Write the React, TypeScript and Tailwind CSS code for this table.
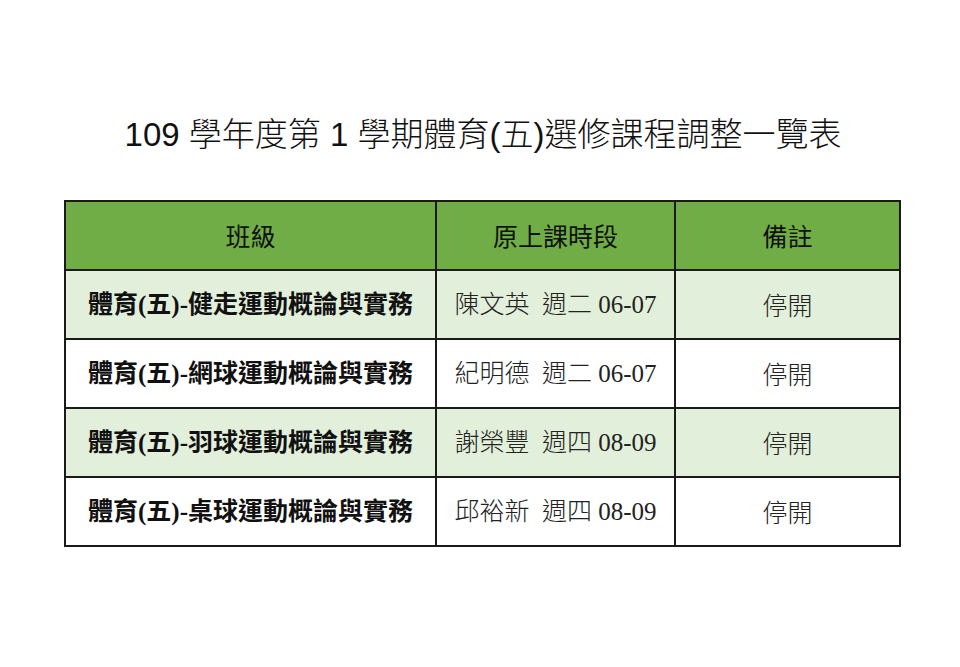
const rows = [
  { name: '體育(五)-健走運動概論與實務', time: '陳文英  週二 06-07', shaded: true },
  { name: '體育(五)-網球運動概論與實務', time: '紀明德  週二 06-07', shaded: false },
  { name: '體育(五)-羽球運動概論與實務', time: '謝榮豐  週四 08-09', shaded: true },
  { name: '體育(五)-桌球運動概論與實務', time: '邱裕新  週四 08-09', shaded: false },
]

export default function App() {
  return (
    <div className="w-[960px] h-[667px] bg-white flex flex-col">
      <h1 className="mt-[112px] h-[46px] text-center text-[33px] leading-[46px] font-light text-[#111] font-['Liberation_Sans','Noto_Sans_CJK_TC',sans-serif] pl-[6px]">
        109 學年度第 1 學期體育(五)選修課程調整一覽表
      </h1>
      <table className="mt-[42px] ml-[64px] w-[835px] border-collapse table-fixed text-[25px] text-[#111]">
        <colgroup>
          <col className="w-[371px]" />
          <col className="w-[239px]" />
          <col className="w-[225px]" />
        </colgroup>
        <thead>
          <tr className="h-[69px] bg-[#70ad47] font-['Noto_Sans_CJK_TC',sans-serif]">
            <th className="border-2 border-[#1a1a1a] font-normal">班級</th>
            <th className="border-2 border-[#1a1a1a] font-normal">原上課時段</th>
            <th className="border-2 border-[#1a1a1a] font-normal">備註</th>
          </tr>
        </thead>
        <tbody>
          {rows.map(r => (
            <tr key={r.name} className={r.shaded ? 'h-[69px] bg-[#e2efda]' : 'h-[69px] bg-white'}>
              <td className="border-2 border-[#1a1a1a] text-center font-bold font-['Liberation_Serif','Noto_Sans_CJK_TC',serif]">
                {r.name}
              </td>
              <td className="border-2 border-[#1a1a1a] text-center whitespace-pre font-['Liberation_Serif','Noto_Sans_CJK_TC',serif] font-light text-[#222]">
                {r.time}
              </td>
              <td className="border-2 border-[#1a1a1a] text-center font-['Noto_Sans_CJK_TC',sans-serif] font-light text-[#222]">
                停開
              </td>
            </tr>
          ))}
        </tbody>
      </table>
    </div>
  )
}
